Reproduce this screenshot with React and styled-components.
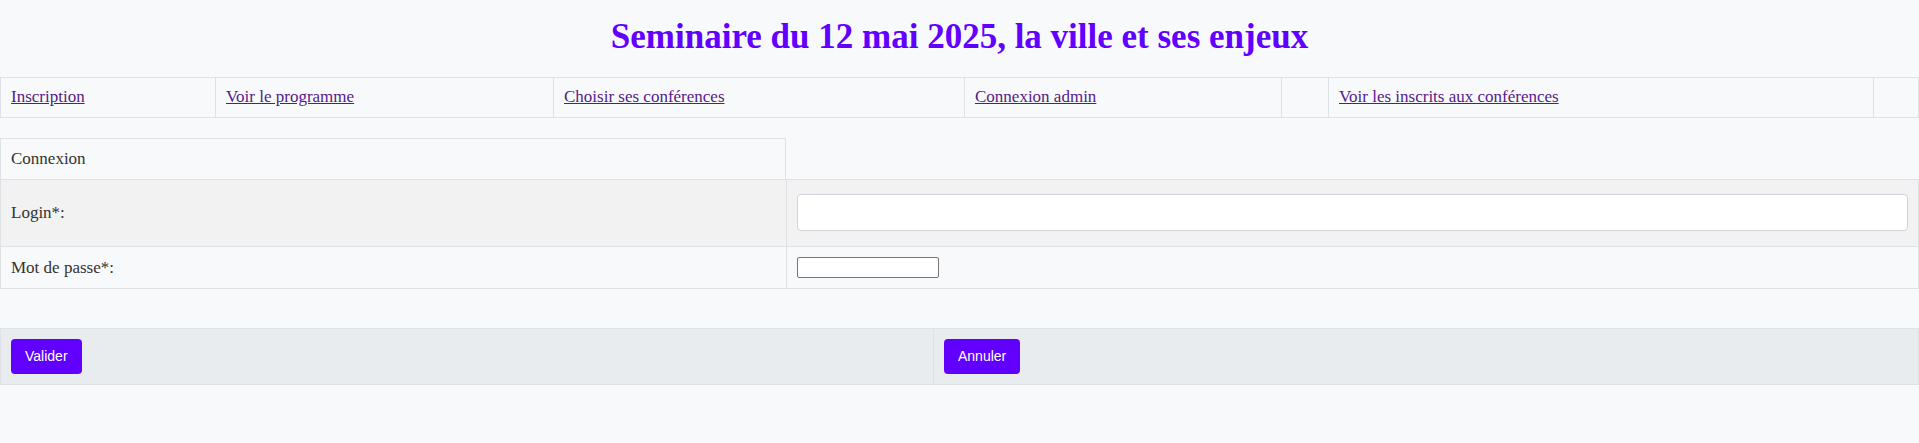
import React from "react";
import styled, { createGlobalStyle } from "styled-components";

const Global = createGlobalStyle`
  html, body { margin: 0; padding: 0; background: #f8f9fa; }
  body { font-family: "Liberation Serif", "Times New Roman", serif; color: #333; font-size: 17px; }
  * { box-sizing: border-box; }
`;

const Page = styled.div`
  display: flex;
  flex-direction: column;
  min-height: 443px;
`;

const Title = styled.h1`
  margin: 0;
  padding-top: 19px;
  text-align: center;
  font-family: "Liberation Serif", serif;
  font-weight: bold;
  font-size: 35px;
  line-height: 36px;
  color: #6100ff;
`;

const Nav = styled.nav`
  margin-top: 22px;
  display: grid;
  grid-template-columns: 215px 338px 411px 317px 47px 545px 1fr;
  border-top: 1px solid #dee2e6;
  border-bottom: 1px solid #dee2e6;
  border-right: 1px solid #dee2e6;
`;

const NavCell = styled.div`
  border-left: 1px solid #dee2e6;
  padding: 9px 10px 10px;
  line-height: 20px;
`;

const NavLink = styled.a`
  color: #551a8b;
  text-decoration: underline;
  cursor: pointer;
`;

const Form = styled.div`
  margin-top: 20px;
  display: flex;
  flex-direction: column;
`;

const Row = styled.div`
  display: grid;
  grid-template-columns: ${(p) => p.$cols || "786px 1fr"};
  background: ${(p) => p.$bg || "transparent"};
  border-top: ${(p) => (p.$top ? "1px solid #dee2e6" : "none")};
  border-bottom: ${(p) => (p.$bottom ? "1px solid #dee2e6" : "none")};
`;

const Cell = styled.div`
  display: flex;
  align-items: center;
  padding: ${(p) => p.$pad || "10px"};
  border-left: 1px solid #dee2e6;
  border-right: ${(p) => (p.$right ? "1px solid #dee2e6" : "none")};
  line-height: 20px;
`;

const HeaderCell = styled.div`
  border: 1px solid #dee2e6;
  border-bottom: none;
  padding: 10px;
  line-height: 20px;
`;

const TextInput = styled.input`
  width: 100%;
  height: 37px;
  background: #fff;
  border: 1px solid #ced4da;
  border-radius: 4px;
  font: inherit;
  padding: 0 10px;
  margin: 0;
`;

const PasswordInput = styled.input`
  width: 142px;
  height: 21px;
  background: #fff;
  border: 1px solid #767676;
  border-radius: 2px;
  margin: 0;
  padding: 1px 2px;
`;

const Buttons = styled(Row)`
  margin-top: 39px;
  background: #e9ecef;
`;

const Button = styled.button`
  background: #6100ff;
  color: #fff;
  border: none;
  border-radius: 4px;
  font-family: "Liberation Sans", Arial, sans-serif;
  font-size: 14px;
  line-height: 19px;
  padding: 8px 14px;
  cursor: pointer;
`;

const navItems = [
  "Inscription",
  "Voir le programme",
  "Choisir ses conférences",
  "Connexion admin",
  "",
  "Voir les inscrits aux conférences",
  "",
];

export default function App() {
  return (
    <Page>
      <Global />
      <Title>Seminaire du 12 mai 2025, la ville et ses enjeux</Title>
      <Nav>
        {navItems.map((t, i) => (
          <NavCell key={i}>{t && <NavLink>{t}</NavLink>}</NavCell>
        ))}
      </Nav>
      <Form>
        <Row>
          <HeaderCell>Connexion</HeaderCell>
          <div />
        </Row>
        <Row $top $bottom $bg="#f2f2f2">
          <Cell $pad="14px 10px 15px">Login*:</Cell>
          <Cell $pad="14px 10px 15px" $right>
            <TextInput type="text" />
          </Cell>
        </Row>
        <Row $bottom>
          <Cell>Mot de passe*:</Cell>
          <Cell $right>
            <PasswordInput type="password" />
          </Cell>
        </Row>
      </Form>
      <Buttons $cols="933px 1fr" $top $bottom>
        <Cell>
          <Button>Valider</Button>
        </Cell>
        <Cell $right>
          <Button>Annuler</Button>
        </Cell>
      </Buttons>
    </Page>
  );
}
